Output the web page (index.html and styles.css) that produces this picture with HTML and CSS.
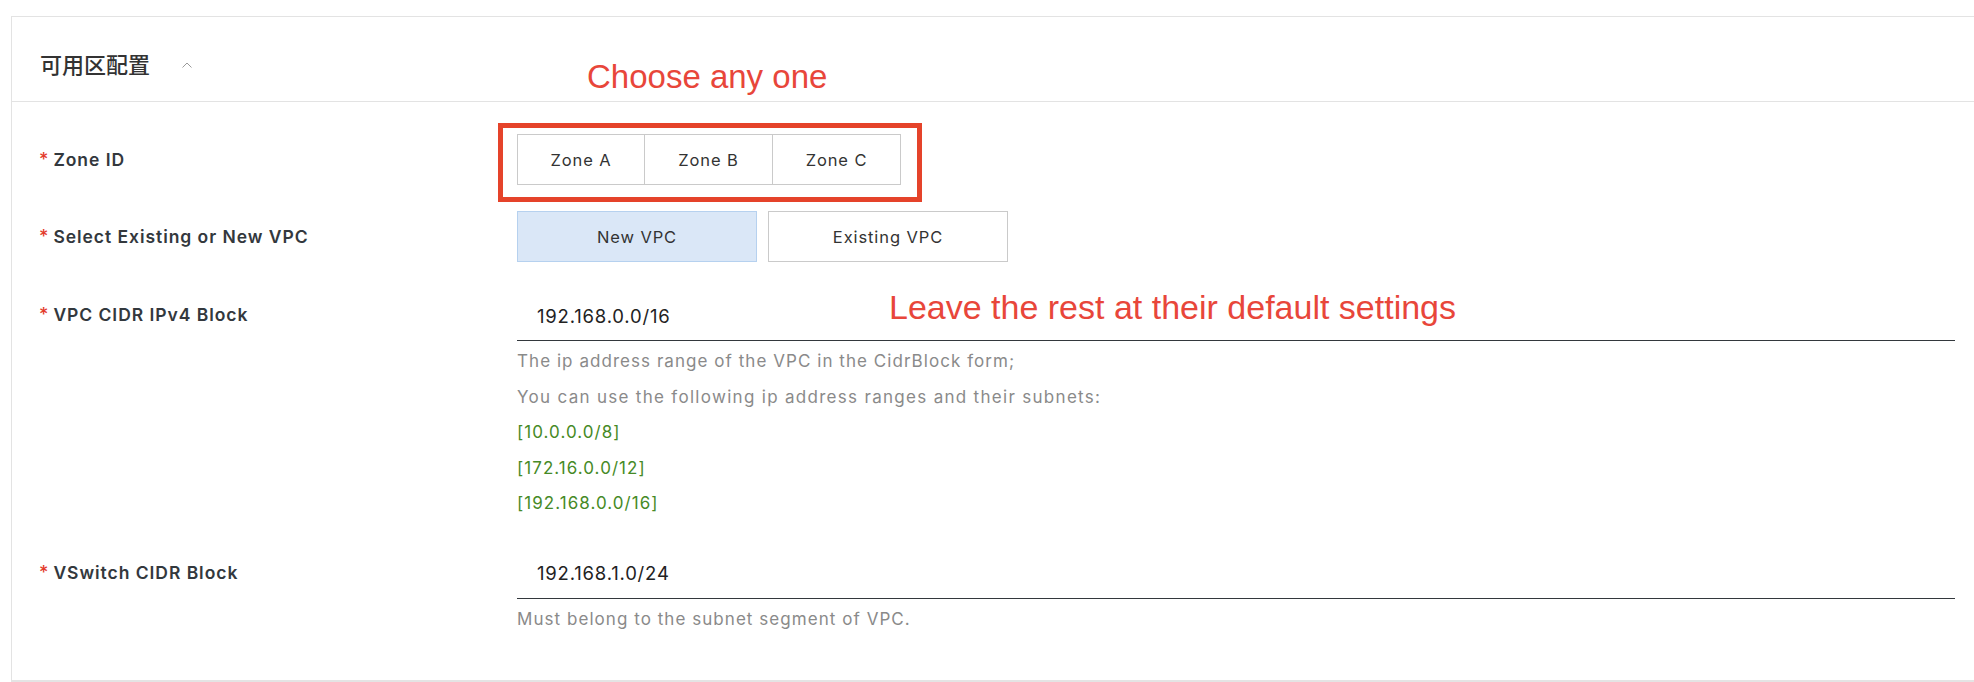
FILE: index.html
```html
<!DOCTYPE html>
<html lang="zh-CN">
<head>
<meta charset="utf-8">
<title>可用区配置</title>
<link rel="stylesheet" href="styles.css">
</head>
<body>
<div class="page">
  <section class="card">
    <header class="card-head">
      <h2 class="card-title">可用区配置</h2>
      <svg class="chevron" width="10" height="6" viewBox="0 0 10 6"><polyline points="0.5,5.5 5,1 9.5,5.5" fill="none" stroke="#9a9a9a" stroke-width="1"/></svg>
    </header>
    <div class="card-body">
      <div class="row row-zone">
        <div class="label"><span class="req">*</span>Zone ID</div>
        <div class="control">
          <div class="seg">
            <button class="seg-btn">Zone A</button>
            <button class="seg-btn">Zone B</button>
            <button class="seg-btn">Zone C</button>
          </div>
        </div>
      </div>
      <div class="row row-vpc">
        <div class="label"><span class="req">*</span>Select Existing or New VPC</div>
        <div class="control radio-group">
          <button class="opt opt-active">New VPC</button>
          <button class="opt">Existing VPC</button>
        </div>
      </div>
      <div class="row row-input">
        <div class="label label-top"><span class="req">*</span>VPC CIDR IPv4 Block</div>
        <div class="control control-wide">
          <div class="input">192.168.0.0/16</div>
          <div class="help">
            <p>The ip address range of the VPC in the CidrBlock form;</p>
            <p class="wide">You can use the following ip address ranges and their subnets:</p>
            <p class="ok">[10.0.0.0/8]</p>
            <p class="ok">[172.16.0.0/12]</p>
            <p class="ok">[192.168.0.0/16]</p>
          </div>
        </div>
      </div>
      <div class="row row-input row-last">
        <div class="label label-top"><span class="req">*</span>VSwitch CIDR Block</div>
        <div class="control control-wide">
          <div class="input">192.168.1.0/24</div>
          <div class="help">
            <p>Must belong to the subnet segment of VPC.</p>
          </div>
        </div>
      </div>
    </div>
  </section>
  <div class="note note-choose">Choose any one</div>
  <div class="note note-leave">Leave the rest at their default settings</div>
  <div class="highlight"></div>
</div>
</body>
</html>
```
FILE: styles.css
```css
html, body {
  margin: 0;
  padding: 0;
  background: #ffffff;
}
body {
  width: 1974px;
  height: 682px;
  overflow: hidden;
  font-family: Inter, "Noto Sans", "Noto Sans CJK SC", sans-serif;
  color: #333;
}
.page {
  position: relative;
  padding: 16px 0 0 11px;
  height: 682px;
  box-sizing: border-box;
}
.card {
  border: 1px solid #e3e3e3;
  border-right: none;
  border-bottom: 2px solid #e4e4e4;
  height: 666px;
  box-sizing: border-box;
  background: #fff;
}
.card-head {
  display: flex;
  align-items: center;
  height: 85px;
  box-sizing: border-box;
  padding: 8px 0 0 28px;
  border-bottom: 1px solid #e3e3e3;
}
.card-title {
  margin: 0;
  font-family: "Noto Sans CJK SC", sans-serif;
  font-weight: 500;
  font-size: 22px;
  line-height: 22px;
  color: #333;
}
.chevron {
  margin-left: 32px;
  margin-top: 4px;
}
.card-body {
  padding-top: 32px;
}
.row {
  display: flex;
}
.label {
  width: 505px;
  flex: none;
  box-sizing: border-box;
  padding-left: 27px;
  display: flex;
  align-items: center;
  font-size: 17.5px;
  font-weight: 600;
  letter-spacing: 0.95px;
  color: #33383d;
}
.req {
  color: #e33a2b;
  font-weight: 500;
  margin-right: 5px;
  font-size: 18px;
  letter-spacing: 0;
}
.row-vpc {
  margin-top: 26px;
}
.row-input {
  margin-top: 26px;
}
.row-last {
  margin-top: 24px;
}
.label-top {
  align-items: flex-start;
  height: 24px;
  padding-top: 15px;
  line-height: 24px;
}
.seg {
  display: flex;
}
.seg-btn {
  width: 128px;
  height: 51px;
  border: 1px solid #cacaca;
  background: #fff;
  font-family: Inter, "Noto Sans", sans-serif;
  font-size: 16.5px;
  letter-spacing: 0.9px;
  color: #333;
  padding: 0;
  margin: 0;
}
.seg-btn + .seg-btn {
  margin-left: -1px;
  width: 129px;
}
.radio-group {
  display: flex;
  gap: 11px;
}
.opt {
  width: 240px;
  height: 51px;
  border: 1px solid #cacaca;
  background: #fff;
  font-family: Inter, "Noto Sans", sans-serif;
  font-size: 16.5px;
  letter-spacing: 0.9px;
  color: #333;
  padding: 0;
  margin: 0;
}
.opt-active {
  background: #dae7f7;
  border-color: #b6d1ef;
}
.control-wide {
  flex: 1;
  margin-right: 19px;
}
.input {
  height: 53px;
  box-sizing: border-box;
  padding: 3px 0 0 20px;
  display: flex;
  align-items: center;
  border-bottom: 1px solid #33383d;
  font-size: 18.5px;
  letter-spacing: 0.8px;
  color: #222;
}
.help {
  margin-top: 3px;
  font-size: 17px;
  letter-spacing: 1.05px;
  line-height: 35.5px;
  color: #8a8a8a;
}
.help p {
  margin: 0;
}
.help .wide {
  letter-spacing: 1.3px;
}
.help .ok {
  color: #468a26;
}
.note {
  position: absolute;
  font-family: "Liberation Sans", Arial, sans-serif;
  line-height: 1;
  color: #e8463a;
  white-space: nowrap;
}
.note-choose {
  left: 587px;
  top: 60px;
  font-size: 33px;
}
.note-leave {
  left: 889px;
  top: 290px;
  font-size: 34px;
}
.highlight {
  position: absolute;
  left: 498px;
  top: 123px;
  width: 424px;
  height: 79px;
  box-sizing: border-box;
  border: 5px solid #e5432a;
}
```
